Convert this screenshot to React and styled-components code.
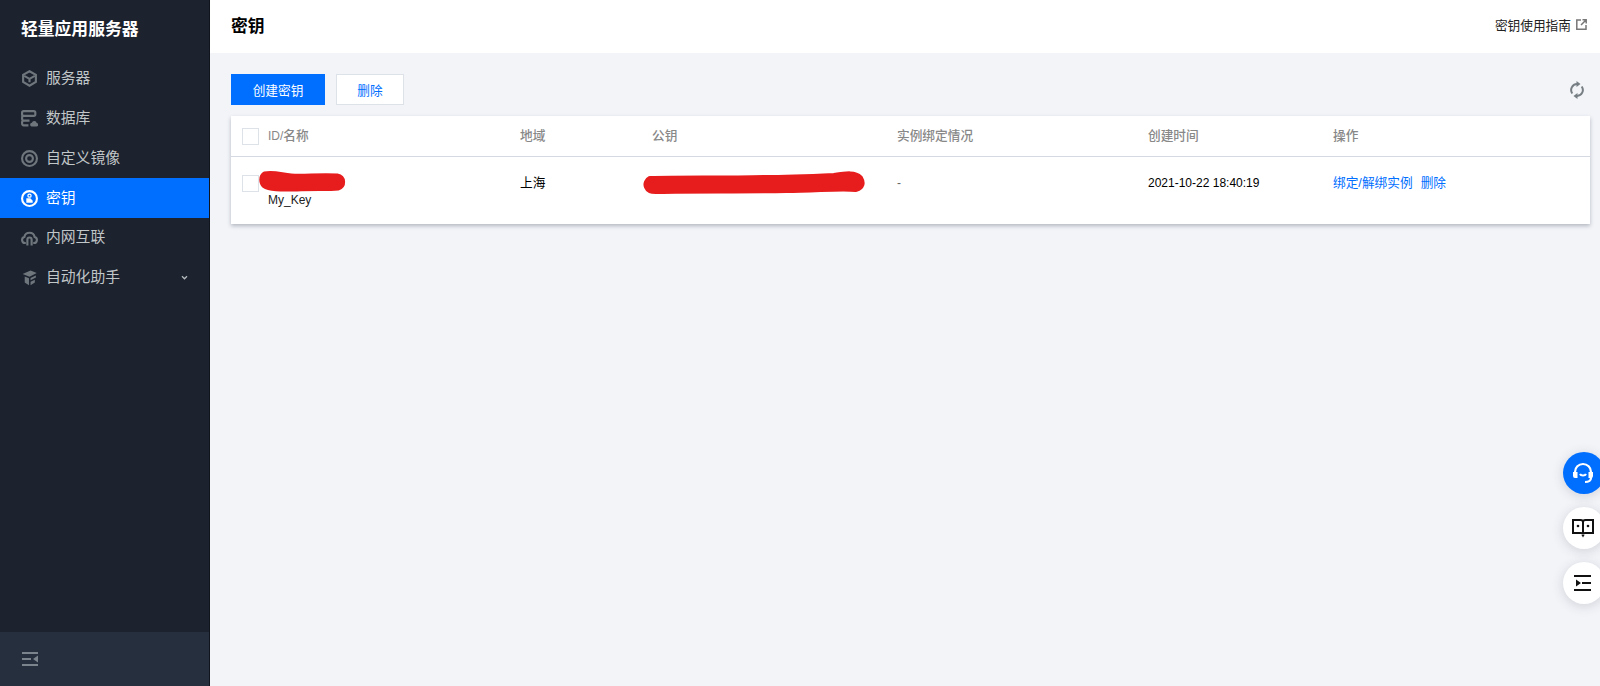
import React from "react";
import styled, { createGlobalStyle } from "styled-components";

const FONT = `"Liberation Sans", Arial, "Noto Sans CJK SC", sans-serif`;

const GlobalStyle = createGlobalStyle`
  html, body {
    margin: 0;
    height: 100%;
    overflow: hidden;
    background: #f2f4f8;
    font-family: ${FONT};
    font-size: 12px;
  }
  #root { height: 100%; }
  * { box-sizing: border-box; }
`;

const Page = styled.div`
  display: flex;
  height: 686px;
`;

// SIDEBAR
const Sidebar = styled.aside`
  width: 210px;
  flex: none;
  display: flex;
  flex-direction: column;
  background: #1c222e;
  border-right: 1px solid #10141c;
`;

const Brand = styled.div`
  height: 58px;
  padding: 0 21px 2px;
  display: flex;
  align-items: center;
  font-size: 16.8px;
  font-weight: 700;
  color: #fff;
`;

const Menu = styled.nav`
  flex: 1;
  display: flex;
  flex-direction: column;
`;

const MenuItem = styled.div`
  height: 40px;
  margin-bottom: ${(p) => (p.$tight ? "-1px" : "0")};
  padding: 0 21px;
  display: flex;
  align-items: center;
  gap: 8px;
  font-size: 14.8px;
  color: ${(p) => (p.$active ? "#fff" : "#c1c6c8")};
  background: ${(p) => (p.$active ? "#006eff" : "transparent")};
  svg.menu-icon {
    flex: none;
    color: ${(p) => (p.$active ? "#fff" : "#6f777d")};
  }
`;

const MenuLabel = styled.span`
  padding-bottom: 3px;
`;

const Chevron = styled.svg`
  margin-left: auto;
  color: #b5babd;
`;

const SideFooter = styled.div`
  height: 54px;
  padding: 0 22px;
  display: flex;
  align-items: center;
  background: #262f3e;
  color: #7b838c;
`;

// MAIN
const Main = styled.main`
  flex: 1;
  min-width: 0;
  display: flex;
  flex-direction: column;
`;

const Header = styled.header`
  height: 53px;
  flex: none;
  padding: 0 13px 4px 21px;
  display: flex;
  align-items: center;
  justify-content: space-between;
  background: #fff;
`;

const PageTitle = styled.h1`
  margin: 0;
  font-size: 16.8px;
  font-weight: 700;
  color: #000;
`;

const GuideLink = styled.div`
  display: flex;
  align-items: center;
  gap: 5px;
  font-size: 12.7px;
  color: #222;
  svg { color: #777; }
`;

const Content = styled.div`
  padding: 21px 10px 0 21px;
`;

const Toolbar = styled.div`
  display: flex;
  align-items: center;
  gap: 11px;
  height: 31px;
  margin-bottom: 11px;
`;

const Button = styled.button`
  height: 31px;
  width: ${(p) => (p.$primary ? "94px" : "68px")};
  padding: 0;
  border: 1px solid ${(p) => (p.$primary ? "#006eff" : "#dde1e8")};
  background: ${(p) => (p.$primary ? "#006eff" : "#fff")};
  color: ${(p) => (p.$primary ? "#fff" : "#006eff")};
  font: 12.7px ${FONT};
`;

const Refresh = styled.svg`
  margin-left: auto;
  margin-right: 6px;
  color: #777f85;
`;

const Table = styled.div`
  background: #fff;
  box-shadow: 0 2px 4px rgba(54, 58, 80, 0.32);
`;

const Row = styled.div`
  display: grid;
  grid-template-columns: 279px 132px 245px 251px 185px 1fr;
  height: ${(p) => (p.$head ? "41px" : "67px")};
  align-items: ${(p) => (p.$head ? "center" : "start")};
  border-bottom: ${(p) => (p.$head ? "1px solid #d4d9e2" : "none")};
  padding-top: ${(p) => (p.$head ? "0" : "17px")};
`;

const Cell = styled.div`
  position: relative;
  padding-left: 10px;
  line-height: 18px;
  font-size: ${(p) => (p.$latin ? "12px" : "12.7px")};
  color: ${(p) => (p.$head ? "#888" : p.$muted ? "#666" : "#000")};
  font-weight: ${(p) => (p.$head ? 500 : 400)};
  white-space: nowrap;
`;

const NameCell = styled(Cell)`
  display: flex;
  align-items: ${(p) => (p.$head ? "center" : "flex-start")};
  gap: 9px;
  padding-left: 11px;
`;

const Check = styled.span`
  width: 17px;
  height: 17px;
  flex: none;
  margin-top: ${(p) => (p.$body ? "1px" : "0")};
  background: #fff;
  border: 1px solid #dde1e8;
`;

const NameStack = styled.div`
  display: flex;
  flex-direction: column;
`;

const IdSlot = styled.span`
  height: 17px;
`;

const KeyName = styled.span`
  color: #222;
`;

const Zh = styled.span`
  font-size: 12.7px;
`;

// red marker strokes over the hidden values
const Redaction = styled.svg`
  position: absolute;
  left: ${(p) => p.$left}px;
  top: ${(p) => p.$top}px;
  overflow: visible;
`;

const Actions = styled.div`
  display: flex;
  gap: 8px;
`;

const Link = styled.a`
  color: #006eff;
`;

// FLOATING BUTTONS
const FloatDock = styled.div`
  position: fixed;
  right: -5px;
  top: 452px;
  display: flex;
  flex-direction: column;
  gap: 13px;
`;

const FloatButton = styled.div`
  width: 42px;
  height: 42px;
  border-radius: 50%;
  display: flex;
  align-items: center;
  justify-content: center;
  padding-right: 2px;
  background: ${(p) => (p.$primary ? "#006eff" : "#fff")};
  color: ${(p) => (p.$primary ? "#fff" : "#111")};
  box-shadow: 0 2px 12px rgba(54, 58, 80, 0.18);
`;

const Icon = ({ children }) => (
  <svg className="menu-icon" width="17" height="17" viewBox="0 0 16 16" fill="none" stroke="currentColor" strokeWidth="2">
    {children}
  </svg>
);

const menu = [
  {
    label: "服务器",
    icon: (
      <Icon>
        <path d="M8 1.2l6 3.3v6.800L8 14.800 2 11.300V4.500z" />
        <path d="M3 5.500L8 8.300l5-2.800M8 8.300v3.200" />
      </Icon>
    ),
  },
  {
    label: "数据库",
    icon: (
      <Icon>
        <rect x="1" y="1" width="12.500" height="4.500" rx="1.500" />
        <path d="M2.500 5.500C1.500 5.500 1 6.500 1 7.500S1.500 10 2.500 10H8M2.500 10C1.500 10 1 11 1 12s.5 2.500 1.500 2.500H7" />
        <path d="M9.800 15.500h4.700a1.600 1.600 0 0 0 .3-3.200 2.400 2.400 0 0 0-4.600-.3 1.800 1.800 0 0 0-.4 3.500z" fill="currentColor" stroke="none" />
      </Icon>
    ),
  },
  {
    label: "自定义镜像",
    icon: (
      <Icon>
        <circle cx="8" cy="8" r="7" />
        <circle cx="8" cy="8" r="3.200" />
      </Icon>
    ),
  },
  {
    label: "密钥",
    active: true,
    icon: (
      <Icon>
        <circle cx="8" cy="8" r="7" />
        <circle cx="8" cy="5.300" r="1.500" strokeWidth="1.200" />
        <path d="M5 7.800h3.800l2.200 2.200v2H5z" fill="currentColor" stroke="none" />
      </Icon>
    ),
  },
  {
    label: "内网互联",
    icon: (
      <Icon>
        <path d="M4.500 13.200H3.800A2.900 2.900 0 0 1 3.200 7.500 4.900 4.900 0 0 1 12.800 7.500a2.900 2.900 0 0 1-.6 5.700h-.7" />
        <path d="M6 15.500V10a2 2 0 0 1 4 0v5.500" />
      </Icon>
    ),
  },
  {
    label: "自动化助手",
    caret: true,
    icon: (
      <Icon>
        <path d="M1.500 4.800L9 1.500l5.800 2.300L8 7.200z" fill="currentColor" stroke="none" />
        <path d="M3.500 7l4 1.800v6.400l-4-2.400zM9 8.500l5-2.500v2L9 10.700zM9 12l4-2v2.800l-4 2.400z" fill="currentColor" stroke="none" />
      </Icon>
    ),
  },
];

export default function App() {
  return (
    <Page>
      <GlobalStyle />
      <Sidebar>
        <Brand>轻量应用服务器</Brand>
        <Menu>
          {menu.map((item) => (
            <MenuItem key={item.label} $active={item.active} $tight={item.label === "密钥"}>
              {item.icon}
              <MenuLabel>{item.label}</MenuLabel>
              {item.caret && (
                <Chevron width="7" height="5" viewBox="0 0 8 6" fill="none" stroke="currentColor" strokeWidth="1.600">
                  <path d="M1 1.500l3 3 3-3" />
                </Chevron>
              )}
            </MenuItem>
          ))}
        </Menu>
        <SideFooter>
          <svg width="16" height="14" viewBox="0 0 16 14" fill="currentColor">
            <path d="M0 0h16v2H0zM0 6h9v2H0zM0 12h16v2H0zM11 7l5-3.500v7z" />
          </svg>
        </SideFooter>
      </Sidebar>
      <Main>
        <Header>
          <PageTitle>密钥</PageTitle>
          <GuideLink>
            密钥使用指南
            <svg width="11" height="11" viewBox="0 0 11 11" fill="none" stroke="currentColor" strokeWidth="1.500">
              <path d="M5 1H.8v9.200H10V6M6.500.8h3.700v3.700M10 1L5 6" />
            </svg>
          </GuideLink>
        </Header>
        <Content>
          <Toolbar>
            <Button $primary>创建密钥</Button>
            <Button>删除</Button>
            <Refresh width="14" height="18" viewBox="0 0 14 18" fill="none" stroke="currentColor" strokeWidth="2">
              <path d="M2.300 12.500A6 6 0 0 1 7 3M11.700 5.500A6 6 0 0 1 7 15" />
              <path d="M6.500 0l4 3-4 3zM7.500 12l-4 3 4 3z" fill="currentColor" stroke="none" />
            </Refresh>
          </Toolbar>
          <Table>
            <Row $head>
              <NameCell $head $latin>
                <Check />
                <span>
                  ID/<Zh>名称</Zh>
                </span>
              </NameCell>
              <Cell $head>地域</Cell>
              <Cell $head>公钥</Cell>
              <Cell $head>实例绑定情况</Cell>
              <Cell $head>创建时间</Cell>
              <Cell $head>操作</Cell>
            </Row>
            <Row>
              <NameCell $latin>
                <Check $body />
                <NameStack>
                  <IdSlot />
                  <KeyName>My_Key</KeyName>
                </NameStack>
                <Redaction $left={29} $top={-4} width="86" height="20" viewBox="0 0 86 20">
                  <path d="M5 5c8-2 16 1 26 2 12 1 28-1 46 0 6 1 6 9 1 10-10 1-27 0-41 1-10 0-27 1-32-3-3-3-3-8 0-10z" fill="#e71d1d" stroke="#e71d1d" strokeWidth="7" strokeLinejoin="round" />
                </Redaction>
              </NameCell>
              <Cell>上海</Cell>
              <Cell>
                <Redaction $left={1} $top={-4} width="222" height="23" viewBox="0 0 222 23">
                  <path d="M7 9c30-1 72 0 114-1 24 0 48-1 70-2 13-2 21-3 26 2 3 5 2 9-4 11-14-2-40 1-70 1-40 1-92 0-128 1C2 22 1 12 7 9z" fill="#e71d1d" stroke="#e71d1d" strokeWidth="6" strokeLinejoin="round" />
                </Redaction>
              </Cell>
              <Cell $muted $latin>-</Cell>
              <Cell $latin>2021-10-22 18:40:19</Cell>
              <Cell>
                <Actions>
                  <Link>绑定/解绑实例</Link>
                  <Link>删除</Link>
                </Actions>
              </Cell>
            </Row>
          </Table>
        </Content>
      </Main>
      <FloatDock>
        <FloatButton $primary>
          <svg width="24" height="24" viewBox="0 0 24 24" fill="none" stroke="currentColor" strokeWidth="2.200">
            <path d="M4 15v-4a8 8 0 0 1 16 0v6c0 2-2 4-6 4" />
            <path d="M2 11h4.500v6H4a2 2 0 0 1-2-2zM17.500 11H22v4a2 2 0 0 1-2 2h-2.500z" fill="currentColor" stroke="none" />
            <path d="M9 13c1 2 5 2 6 0" />
          </svg>
        </FloatButton>
        <FloatButton>
          <svg width="22" height="20" viewBox="0 0 22 20" fill="none" stroke="currentColor" strokeWidth="2">
            <path d="M1 2h7.500c1.400 0 2.500 1 2.500 2 0-1 1.100-2 2.500-2H21v13h-8c-1 0-2 .5-2 1.500 0-1-1-1.500-2-1.500H1zM11 4v12.500" />
            <circle cx="6" cy="8" r="1.300" fill="currentColor" stroke="none" />
            <circle cx="16" cy="8" r="1.300" fill="currentColor" stroke="none" />
            <path d="M9.500 17h3L11 19.500z" fill="currentColor" stroke="none" />
          </svg>
        </FloatButton>
        <FloatButton>
          <svg width="20" height="18" viewBox="0 0 20 18" fill="currentColor">
            <path d="M1 1h17v2H1zM9 8h9v2H9zM1 15h17v2H1zM3 5.500L8 9l-5 3.500z" />
          </svg>
        </FloatButton>
      </FloatDock>
    </Page>
  );
}
